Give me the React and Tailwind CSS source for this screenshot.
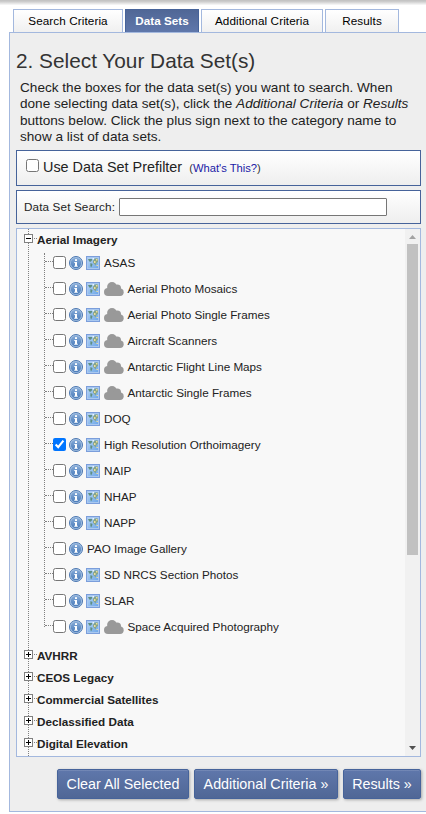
import React from "react";

const dataSets = [
  { name: "ASAS", map: true },
  { name: "Aerial Photo Mosaics", map: true, cloud: true },
  { name: "Aerial Photo Single Frames", map: true, cloud: true },
  { name: "Aircraft Scanners", map: true, cloud: true },
  { name: "Antarctic Flight Line Maps", map: true, cloud: true },
  { name: "Antarctic Single Frames", map: true, cloud: true },
  { name: "DOQ", map: true },
  { name: "High Resolution Orthoimagery", map: true, checked: true },
  { name: "NAIP", map: true },
  { name: "NHAP", map: true },
  { name: "NAPP", map: true },
  { name: "PAO Image Gallery" },
  { name: "SD NRCS Section Photos", map: true },
  { name: "SLAR", map: true },
  { name: "Space Acquired Photography", map: true, cloud: true },
];

const categories = ["AVHRR", "CEOS Legacy", "Commercial Satellites", "Declassified Data", "Digital Elevation"];

function InfoIcon() {
  return (
    <svg className="ml-[3px] h-[14px] w-[14px] shrink-0" viewBox="0 0 14 14">
      <defs>
        <linearGradient id="info" x1="0" y1="0" x2="0" y2="1">
          <stop offset="0" stopColor="#86abd8" />
          <stop offset="1" stopColor="#4a7cba" />
        </linearGradient>
      </defs>
      <circle cx="7" cy="7" r="6.5" fill="#a9c5e5" stroke="#4a76b0" />
      <circle cx="7" cy="7" r="5.2" fill="url(#info)" />
      <rect x="6" y="3.200" width="2" height="1.800" fill="#fff" />
      <path d="M5.300 6H8v3.800h.8v1H5.200v-1H6V7h-.7z" fill="#fff" />
    </svg>
  );
}

function MapIcon() {
  return (
    <svg className="ml-[3px] h-[14px] w-[14px] shrink-0" viewBox="0 0 14 14">
      <defs>
        <linearGradient id="sea" x1="0" y1="0" x2="1" y2="1">
          <stop offset="0" stopColor="#b4d3f5" />
          <stop offset="1" stopColor="#6fa8e8" />
        </linearGradient>
      </defs>
      <rect x=".5" y=".5" width="13" height="13" fill="#a9c8f0" stroke="#7b9edb" />
      <rect x="2" y="2" width="10" height="10" fill="url(#sea)" />
      <path d="M2 3h4.500L5.500 5 4 6 3 5zM4.500 7l2 1L6 10l-1 1.500-.7-2z" fill="#5f8f82" />
      <path d="M7 5l1-2 2-.7 2 .5v3L10.500 7 9.500 9.500 8.300 8 7.200 7z" fill="#86a58a" />
      <path d="M8 5h1.500v2H8zM10 3h1.500v1.500H10zM10.500 9h1.500v1h-1.500z" fill="#ecdd9c" />
      <path d="M6.500 2h1.500v1.500H6.500z" fill="#eef6fc" />
    </svg>
  );
}

function CloudIcon() {
  return (
    <svg className="ml-[4px] h-[14px] w-[20px] shrink-0" viewBox="0 0 20 14" fill="#999">
      <circle cx="4" cy="9.900" r="4" />
      <circle cx="8" cy="5" r="4.900" />
      <circle cx="13.200" cy="6.500" r="3.900" />
      <circle cx="16" cy="10.300" r="3.700" />
      <rect x="4" y="6" width="12" height="8" />
    </svg>
  );
}

function Toggle({ open }) {
  return (
    <svg className="mt-[5px] ml-[7px] h-[9px] w-[9px] shrink-0" viewBox="0 0 9 9" shapeRendering="crispEdges">
      <rect width="9" height="9" fill="#808080" />
      <rect x="1" y="1" width="7" height="7" fill="#fff" />
      <rect x="2" y="4" width="5" height="1" fill="#000" />
      {!open && <rect x="4" y="2" width="1" height="5" fill="#000" />}
    </svg>
  );
}

function Category({ name, open }) {
  return (
    <div className="flex h-[22px] font-bold">
      <Toggle open={open} />
      <span className="mt-[9px] ml-px h-0 w-[3px] border-t border-dotted border-[#808080]" />
      <span className="leading-[22px]">{name}</span>
    </div>
  );
}

function DataSet({ name, map, cloud, checked }) {
  return (
    <li className="flex h-[26px] items-center">
      <span className="-mt-[3px] h-0 w-[8px] border-t border-dotted border-[#808080]" />
      <input type="checkbox" defaultChecked={checked} className="m-0 mt-[-1px] h-[13px] w-[13px] shrink-0" />
      <InfoIcon />
      {map && <MapIcon />}
      {cloud && <CloudIcon />}
      <span className={cloud ? "ml-[3.5px]" : "ml-[4px]"}>{name}</span>
    </li>
  );
}

const tab =
  "h-[23px] border border-b-0 border-[#a3b8de] bg-linear-to-b from-white to-[#f0f0f0] text-center tracking-[0.1px] leading-[21px]";
const button =
  "h-[30px] rounded-[2px] border border-[#46639a] bg-linear-to-b from-[#5f77ab] to-[#506796] text-center text-[14.3px] leading-[28px] text-white shadow-[1px_1px_3px_rgba(0,0,0,0.3),inset_0_1px_0_rgba(255,255,255,0.12)]";

export default function App() {
  return (
    <div className="h-[814px] w-[426px] overflow-hidden bg-white font-['Liberation_Sans',Arial,sans-serif] text-[11.7px] text-[#222]">
      <div className="h-[9px] bg-linear-to-b from-[#c4c4c4] from-10% to-white to-60%" />
      <nav className="flex gap-[2px] pl-[13px] text-black">
        <div className={`${tab} w-[110px]`}>Search Criteria</div>
        <div className="h-[23px] w-[74px] border border-b-0 border-[#46639a] bg-linear-to-b from-[#506796] to-[#5f77ab] text-center leading-[21px] font-bold text-white">
          Data Sets
        </div>
        <div className={`${tab} w-[122px]`}>Additional Criteria</div>
        <div className={`${tab} w-[74px]`}>Results</div>
      </nav>
      <main className="ml-[9px] h-[780px] w-[430px] border border-[#a3b8de] bg-[#eee] pl-[6px]">
        <h1 className="h-[46px] pt-[16px] text-[20.8px] leading-[24px] text-[#333]">2. Select Your Data Set(s)</h1>
        <p className="h-[71px] pt-px pl-[4px] text-[13.6px] leading-[16.4px] whitespace-nowrap">
          Check the boxes for the data set(s) you want to search. When
          <br />
          done selecting data set(s), click the <i>Additional Criteria</i> or <i>Results</i>
          <br />
          buttons below. Click the plus sign next to the category name to
          <br />
          show a list of data sets.
        </p>
        <section className="flex h-[36px] w-[405px] items-start border border-[#46639a] bg-linear-to-b from-white to-[#eee] pl-[9px]">
          <input type="checkbox" className="m-0 mt-[8px] h-[13px] w-[13px]" />
          <span className="ml-[4px] text-[14.4px] leading-[32px]">Use Data Set Prefilter</span>
          <span className="ml-[7px] text-[11.2px] leading-[34px] text-[#333]">
            (<a className="text-[#1a1aa6]">What's This?</a>)
          </span>
        </section>
        <section className="mt-[4px] flex h-[34px] w-[405px] items-start border border-[#46639a] bg-linear-to-b from-white to-[#eee] pl-[7px]">
          <label className="w-[95px] tracking-[0.13px] leading-[32px]">Data Set Search:</label>
          <input className="mt-[7px] h-[18px] w-[268px] rounded-[1px] border border-[#767676] bg-white" />
        </section>
        <section className="mt-[4px] flex h-[529px] w-[405px] overflow-hidden border border-[#a3b8de] bg-[#f8f8f8]">
          <div className="flex w-[388px]">
            <div className="ml-[11px] w-0 border-l border-dotted border-[#808080]" />
            <div className="z-10 -ml-[12px] grow">
              <Category name="Aerial Imagery" open />
              <ul className="relative -mt-px ml-[28px]">
                {dataSets.map((item) => (
                  <DataSet key={item.name} {...item} />
                ))}
                <span className="absolute -left-px top-[3px] h-[374px] border-l border-dotted border-[#808080]" />
              </ul>
              <div className="mt-[5px]">
                {categories.map((name) => (
                  <Category key={name} name={name} />
                ))}
              </div>
            </div>
          </div>
          <div className="flex w-[15px] flex-col items-center bg-[#f1f1f1]">
            <svg className="mt-[6px] h-[4px] w-[7px]" viewBox="0 0 7 4">
              <path d="M0 4 3.500 0 7 4z" fill="#a3a3a3" />
            </svg>
            <div className="mt-[5px] h-[311px] w-[11px] bg-[#c1c1c1]" />
            <svg className="mt-auto mb-[6px] h-[4px] w-[7px]" viewBox="0 0 7 4">
              <path d="M0 0h7L3.500 4z" fill="#505050" />
            </svg>
          </div>
        </section>
        <div className="mt-[12px] ml-[41px] flex gap-[5px]">
          <button className={`${button} w-[132px]`}>Clear All Selected</button>
          <button className={`${button} w-[144px]`}>Additional Criteria »</button>
          <button className={`${button} w-[78px]`}>Results »</button>
        </div>
      </main>
    </div>
  );
}
